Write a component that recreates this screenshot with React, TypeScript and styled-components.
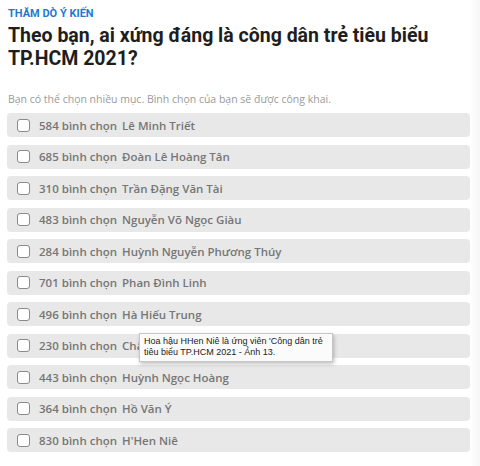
import styled, { createGlobalStyle } from "styled-components";

const GlobalStyle = createGlobalStyle`
  body {
    margin: 0;
    background: #ffffff;
    font-family: "Open Sans", sans-serif;
  }
`;

const Page = styled.div`
  position: relative;
  width: 480px;
  height: 466px;
  overflow: hidden;
  background: linear-gradient(to right, #ffffff 0, #ffffff 470px, #f6f6f6 480px);
`;

const Poll = styled.div`
  padding: 7px 10px 0 7px;
  display: flex;
  flex-direction: column;
`;

const Kicker = styled.div`
  font-family: Roboto, sans-serif;
  font-weight: 700;
  font-size: 11px;
  color: #1f7ad0;
  padding-left: 1px;
  line-height: 13px;
`;

const Title = styled.h2`
  margin: 4px 0 0 1px;
  font-family: Roboto, sans-serif;
  font-weight: 700;
  font-size: 19.5px;
  line-height: 23px;
  color: #1e1e1e;
`;

const Hint = styled.p`
  margin: 22px 0 7px 1px;
  font-size: 10.5px;
  color: #9a9a9a;
  line-height: 14px;
`;

const Options = styled.div`
  display: flex;
  flex-direction: column;
  gap: 7.5px;
`;

const Row = styled.label`
  display: flex;
  align-items: center;
  height: 24px;
  background: #e8e8e8;
  border-radius: 4px;
  padding-left: 10px;
  font-size: 11.5px;
  font-weight: 600;
  color: #767676;
`;

const Box = styled.span`
  width: 11px;
  height: 11px;
  border: 1px solid #8a8a8a;
  border-radius: 3px;
  background: #fff;
  margin-right: 9px;
`;

const Count = styled.span`
  margin-right: 5px;
`;

const Tooltip = styled.div`
  position: absolute;
  left: 139px;
  top: 333px;
  width: 184px;
  padding: 2px 4px 3px;
  background: #fbfbfb;
  border: 1px solid #c6c6c6;
  box-shadow: 1px 2px 4px rgba(0, 0, 0, 0.25);
  font-family: "Liberation Sans", Arial, sans-serif;
  font-size: 9px;
  line-height: 11px;
  color: #222;
`;

const options = [
  { votes: 584, name: "Lê Minh Triết" },
  { votes: 685, name: "Đoàn Lê Hoàng Tân" },
  { votes: 310, name: "Trần Đặng Văn Tài" },
  { votes: 483, name: "Nguyễn Võ Ngọc Giàu" },
  { votes: 284, name: "Huỳnh Nguyễn Phương Thúy" },
  { votes: 701, name: "Phan Đình Linh" },
  { votes: 496, name: "Hà Hiếu Trung" },
  { votes: 230, name: "Châu Đăng Khoa" },
  { votes: 443, name: "Huỳnh Ngọc Hoàng" },
  { votes: 364, name: "Hồ Văn Ý" },
  { votes: 830, name: "H'Hen Niê" },
];

export default function App() {
  return (
    <Page>
      <GlobalStyle />
      <Poll>
        <Kicker>THĂM DÒ Ý KIẾN</Kicker>
        <Title>
          Theo bạn, ai xứng đáng là công dân trẻ tiêu biểu
          <br />
          TP.HCM 2021?
        </Title>
        <Hint>Bạn có thể chọn nhiều mục. Bình chọn của bạn sẽ được công khai.</Hint>
        <Options>
          {options.map((o) => (
            <Row key={o.name}>
              <Box />
              <Count>{o.votes} bình chọn</Count>
              {o.name}
            </Row>
          ))}
        </Options>
      </Poll>
      <Tooltip>
        Hoa hậu HHen Niê là ứng viên 'Công dân trẻ
        <br />
        tiêu biểu TP.HCM 2021 - Ảnh 13.
      </Tooltip>
    </Page>
  );
}
